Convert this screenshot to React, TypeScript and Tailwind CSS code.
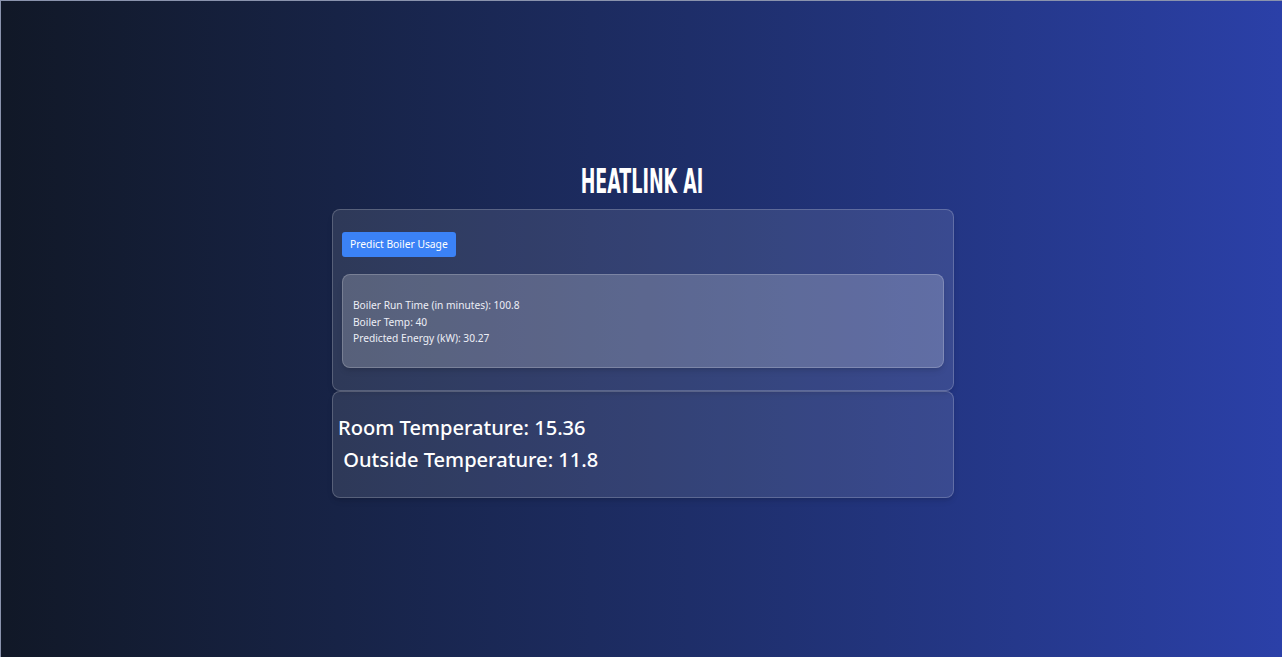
import React from "react";

export default function App() {
  return (
    <div
      className="min-h-screen w-full bg-linear-to-r from-[#111827] to-[#2b40a8] border-t border-l border-[#8a93ad] flex flex-col items-center justify-center text-white pt-[2px]"
      style={{ fontFamily: '"Noto Sans", "Open Sans", sans-serif' }}
    >
      <h1
        className="text-[33px] leading-[40px] font-bold scale-x-[0.59] mb-[7px] uppercase"
        style={{ fontFamily: '"Liberation Sans Narrow", "DejaVu Sans Condensed", "Liberation Sans", sans-serif' }}
      >
        HEATLINK AI
      </h1>
      <div className="w-[622px] ml-[3px] flex flex-col">
        <div className="rounded-lg border border-white/20 bg-white/10 px-[9px] pt-[22px] pb-[22px] shadow-md">
          <button className="block h-[25px] px-[8px] rounded-[3px] bg-[#3b82f6] text-[10.3px] text-white">
            Predict Boiler Usage
          </button>
          <div className="mt-[17px] h-[94px] rounded-lg border border-white/20 bg-white/20 px-2.5 pt-[22px] text-[10.2px] leading-[16.5px] text-[#eceef6] shadow-md">
            <p>Boiler Run Time (in minutes): 100.8</p>
            <p>Boiler Temp: 40</p>
            <p>Predicted Energy (kW): 30.27</p>
          </div>
        </div>
        <div className="h-[107px] rounded-lg border border-white/20 bg-white/10 pl-[5px] pt-[20px] shadow-md">
          <p className="text-[20.1px] leading-[32px] font-medium">Room Temperature: 15.36</p>
          <p className="text-[20.1px] leading-[32px] font-medium">&nbsp;Outside Temperature: 11.8</p>
        </div>
      </div>
    </div>
  );
}
